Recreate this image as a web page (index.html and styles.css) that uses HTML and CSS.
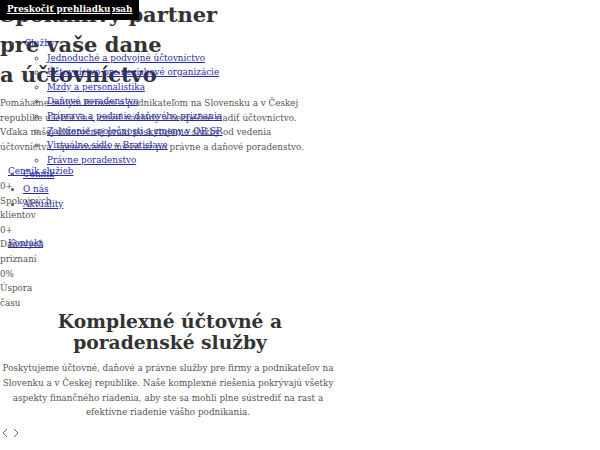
FILE: index.html
```html
<!DOCTYPE html>
<html lang="sk">
<head>
    <meta charset="UTF-8">
    <meta name="viewport" content="width=device-width, initial-scale=1.0">
    <title>Účtovníctvo a dane</title>
    <link rel="stylesheet" href="styles.css">
</head>
<body>
    <a class="skip-link" href="#obsah">Prejsť na hlavný obsah</a>
    <a class="skip-link skip-tour" href="#">Preskočiť prehliadku</a>

    <header class="site-header">
        <nav class="main-nav">
            <ul class="nav-list">
                <li>
                    <button type="button" class="nav-toggle">Služby</button>
                    <ul class="sub-list">
                        <li><a href="#">Jednoduché a podvojné účtovníctvo</a></li>
                        <li><a href="#">Účtovníctvo pre neziskové organizácie</a></li>
                        <li><a href="#">Mzdy a personalistika</a></li>
                        <li><a href="#">Daňové poradenstvo</a></li>
                        <li><a href="#">Príprava a podanie daňového priznania</a></li>
                        <li><a href="#">Založenie spoločnosti a zmeny v OR SR</a></li>
                        <li><a href="#">Virtuálne sídlo v Bratislave</a></li>
                        <li><a href="#">Právne poradenstvo</a></li>
                    </ul>
                </li>
                <li><a href="#">Cenník</a></li>
                <li><a href="#">O nás</a></li>
                <li><a href="#">Aktuality</a></li>
            </ul>
            <a class="nav-cta" href="#">Kontakt</a>
        </nav>
    </header>

    <main id="obsah">
        <section class="hero">
            <h1>Spoľahlivý partner <span class="hero-highlight">pre vaše dane</span> a účtovníctvo</h1>
            <p class="hero-text">Pomáhame malým firmám a podnikateľom na Slovensku a v Českej republike ušetriť čas, znížiť náklady a bezpečne riadiť účtovníctvo. Vďaka našej dlhoročnej praxi poskytujeme služby od vedenia účtovníctva, spracovania miezd až po právne a daňové poradenstvo.</p>
            <div class="hero-actions">
                <a href="#">Cenník služieb</a>
            </div>
            <div class="stats">
                <div class="stat">
                    <div class="stat-number">0+</div>
                    <div class="stat-label">Spokojných klientov</div>
                </div>
                <div class="stat">
                    <div class="stat-number">0+</div>
                    <div class="stat-label">Daňových priznaní</div>
                </div>
                <div class="stat">
                    <div class="stat-number">0%</div>
                    <div class="stat-label">Úspora času</div>
                </div>
            </div>
        </section>

        <section class="services">
            <h2>Komplexné účtovné a poradenské služby</h2>
            <p>Poskytujeme účtovné, daňové a právne služby pre firmy a podnikateľov na Slovenku a v Českej republike. Naše komplexné riešenia pokrývajú všetky aspekty finančného riadenia, aby ste sa mohli plne sústrediť na rast a efektívne riadenie vášho podnikania.</p>
            <div class="slider-nav">
                <button type="button" class="slider-btn" aria-label="Predchádzajúce">
                    <svg width="6" height="10" viewBox="0 0 6 10"><path d="M5 1 1 5l4 4" fill="none" stroke="#666" stroke-width="1"/></svg>
                </button>
                <button type="button" class="slider-btn" aria-label="Ďalšie">
                    <svg width="6" height="10" viewBox="0 0 6 10"><path d="M1 1l4 4-4 4" fill="none" stroke="#666" stroke-width="1"/></svg>
                </button>
            </div>
        </section>
    </main>
</body>
</html>
```

FILE: styles.css
```css
body {
    margin: 0;
    font-family: "DejaVu Serif", serif;
    font-size: 8.8px;
    line-height: 14.6px;
    color: #555;
    background: #fff;
}

a {
    color: #2a2aa8;
}

/* odkazy na preskocenie */
.skip-link {
    position: absolute;
    top: 0;
    left: 0;
    z-index: 20;
    padding: 3px 7px 4px 21px;
    background-color: #000;
    color: #fff;
    font-weight: bold;
    font-size: 8.8px;
    line-height: 13px;
}

.skip-tour {
    z-index: 21;
    padding-left: 7px;
    padding-right: 2px;
}

/* hlavicka */
.site-header {
    position: absolute;
    top: 36px;
    left: 0;
    z-index: 10;
}

.nav-list {
    margin: 0;
    padding-left: 23px;
}

.nav-toggle {
    padding: 0 0 0 2px;
    border: none;
    background: none;
    font: inherit;
    color: #2a2aa8;
    cursor: pointer;
}

.sub-list {
    margin: 0;
    padding-left: 24px;
    list-style: circle;
}

.nav-cta {
    display: inline-block;
    margin-top: 25px;
    margin-left: 8px;
}

/* hero */
.hero h1 {
    margin: 0;
    font-size: 21px;
    line-height: 30px;
    color: #333;
}

.hero-highlight {
    display: block;
}

.hero-text {
    margin: 6px 0 0;
    max-width: 312px;
}

.hero-actions {
    margin-top: 10px;
    padding-left: 8px;
}

.stat-label {
    width: min-content;
}

/* sluzby */
.services {
    max-width: 340px;
    text-align: center;
}

.services h2 {
    margin: 1px 0 0;
    font-size: 18.7px;
    line-height: 21px;
    color: #333;
}

.services p {
    margin: 8px 0 0;
    padding-right: 4px;
}

.slider-nav {
    display: flex;
    gap: 1px;
    margin-top: 8px;
    text-align: left;
}

.slider-btn {
    padding: 0 2px;
    border: none;
    background: none;
    cursor: pointer;
    line-height: 0;
}
```
